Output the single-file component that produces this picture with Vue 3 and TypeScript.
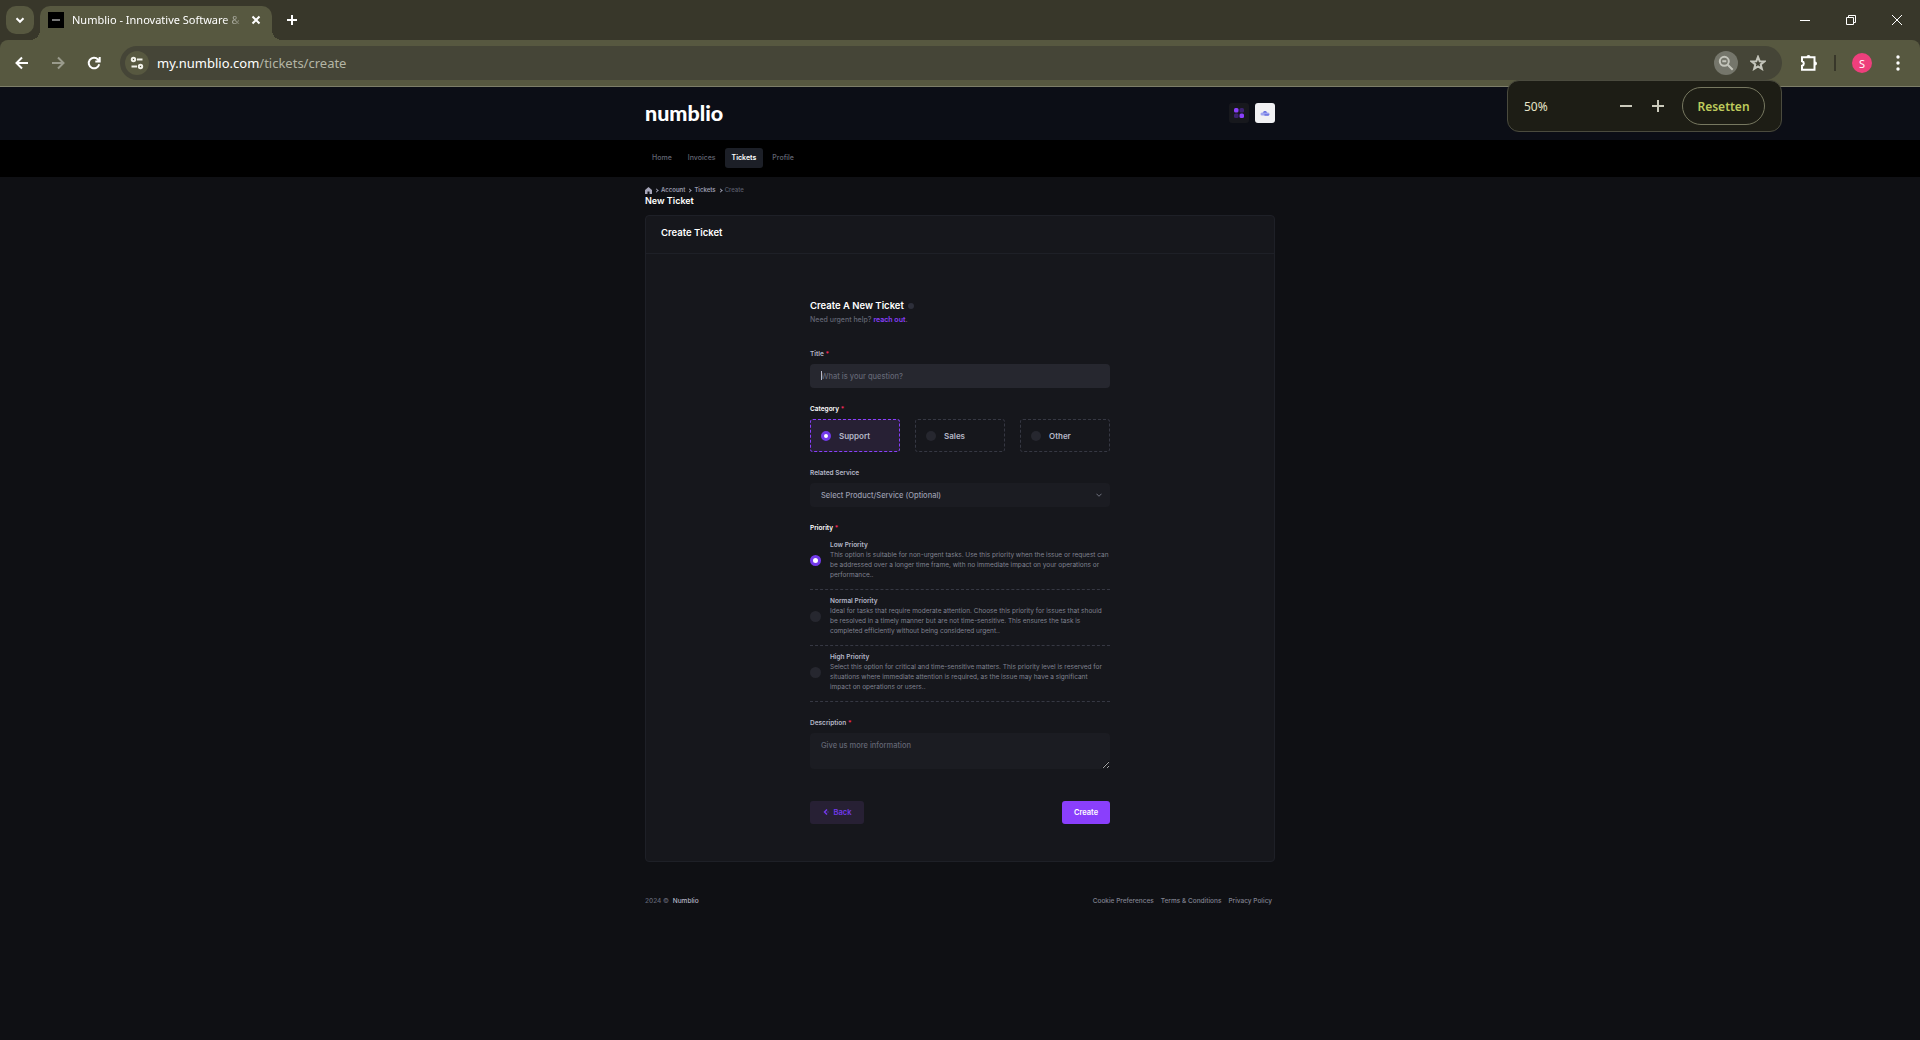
<script setup lang="ts">
import { computed, ref } from 'vue'

interface Option {
  id: string
  label: string
  text?: string
}

const zoomPercent = ref(50)
const zoomStyle = computed(() => ({ zoom: zoomPercent.value / 100 }))

const navItems = ['Home', 'Invoices', 'Tickets', 'Profile']
const activeNav = 'Tickets'

const categories: Option[] = [
  { id: 'support', label: 'Support' },
  { id: 'sales', label: 'Sales' },
  { id: 'other', label: 'Other' },
]
const category = ref('support')

const priorities: Option[] = [
  {
    id: 'low',
    label: 'Low Priority',
    text: 'This option is suitable for non-urgent tasks. Use this priority when the issue or request can be addressed over a longer time frame, with no immediate impact on your operations or performance..',
  },
  {
    id: 'normal',
    label: 'Normal Priority',
    text: 'Ideal for tasks that require moderate attention. Choose this priority for issues that should be resolved in a timely manner but are not time-sensitive. This ensures the task is completed efficiently without being considered urgent..',
  },
  {
    id: 'high',
    label: 'High Priority',
    text: 'Select this option for critical and time-sensitive matters. This priority level is reserved for situations where immediate attention is required, as the issue may have a significant impact on operations or users..',
  },
]
const priority = ref('low')

const title = ref('')
const description = ref('')
const footerLinks = ['Cookie Preferences', 'Terms & Conditions', 'Privacy Policy']
</script>

<template>
  <div class="browser">
    <div class="tabstrip">
      <button class="tab-search" aria-label="Search tabs">
        <svg width="12" height="12" viewBox="0 0 12 12"><path d="M2.5 4.3 6 7.8l3.5-3.5" /></svg>
      </button>
      <div class="tab">
        <span class="favicon"><i></i></span>
        <span class="tab-title">Numblio - Innovative Software &amp;</span>
        <button class="plain tab-close" aria-label="Close tab">
          <svg width="10" height="10" viewBox="0 0 10 10"><path d="m1.5 1.5 7 7m0-7-7 7" /></svg>
        </button>
      </div>
      <button class="plain tab-new" aria-label="New tab">
        <svg width="12" height="12" viewBox="0 0 12 12"><path d="M6 1v10M1 6h10" /></svg>
      </button>
      <div class="window-controls">
        <button class="plain" aria-label="Minimize">
          <svg width="12" height="12" viewBox="0 0 12 12"><path d="M1 6.5h10" /></svg>
        </button>
        <button class="plain" aria-label="Restore">
          <svg width="12" height="12" viewBox="0 0 12 12"><path d="M1.5 3.5h7v7h-7zM3.5 3.500v-2h7v7h-2" /></svg>
        </button>
        <button class="plain" aria-label="Close">
          <svg width="12" height="12" viewBox="0 0 12 12"><path d="m1 1 10 10M11 1 1 11" /></svg>
        </button>
      </div>
    </div>

    <div class="toolbar-back">
      <div class="toolbar">
        <button class="plain tool" aria-label="Back">
          <svg width="16" height="16" viewBox="0 0 16 16"><path d="M14 8H3M8 2.500 2.500 8 8 13.500" /></svg>
        </button>
        <button class="plain tool faded" aria-label="Forward">
          <svg width="16" height="16" viewBox="0 0 16 16"><path d="M2 8h11M8 2.500 13.500 8 8 13.500" /></svg>
        </button>
        <button class="plain tool" aria-label="Reload">
          <svg width="16" height="16" viewBox="0 0 16 16"><path d="M13.200 9.200A5.300 5.300 0 1 1 12 4.500l1.500 1.500M13.700 2v4.400H9.300" /></svg>
        </button>
        <div class="omnibox">
          <button class="site-info" aria-label="Site information">
            <svg width="14" height="14" viewBox="0 0 14 14"><circle cx="3.500" cy="3.500" r="1.700" /><path d="M7 3.500h5.500M1.500 10.500H7" /><circle cx="10.500" cy="10.500" r="1.700" /></svg>
          </button>
          <span class="url"><b>my.numblio.com</b>/tickets/create</span>
          <button class="zoom-badge" aria-label="Zoom">
            <svg width="16" height="16" viewBox="0 0 16 16"><circle cx="6.300" cy="6.300" r="4.500" /><path d="M4.300 6.300h4M9.700 9.700l5 5" /></svg>
          </button>
          <button class="plain star" aria-label="Bookmark this tab">
            <svg width="16" height="16" viewBox="0 0 16 16"><path d="m8 1.900 1.700 4.300 4.600.3-3.600 2.900 1.200 4.500L8 11.400l-3.900 2.500 1.200-4.500-3.600-2.900 4.600-.3z" /></svg>
          </button>
        </div>
        <button class="plain puzzle" aria-label="Extensions">
          <svg width="18" height="18" viewBox="0 0 18 18"><path d="M2 3.200h12.500v12.600H2v-4.100a2.300 2.300 0 0 0 0-4.500z" /><path class="knob" d="M6.500 3a2 2 0 0 1 4 0zM15 7.500a2 2 0 0 1 0 4z" /></svg>
        </button>
        <i class="divider"></i>
        <button class="avatar" aria-label="Account">S</button>
        <button class="plain kebab" aria-label="Menu">
          <svg width="4" height="16" viewBox="0 0 4 16"><circle cx="2" cy="2" r="1.700" /><circle cx="2" cy="8" r="1.700" /><circle cx="2" cy="14" r="1.700" /></svg>
        </button>

        <div class="zoom-popup">
          <span class="zoom-value">{{ zoomPercent }}%</span>
          <button class="plain zoom-step" aria-label="Zoom out" @click="zoomPercent -= 10">
            <svg width="12" height="12" viewBox="0 0 12 12"><path d="M0 6h12" /></svg>
          </button>
          <button class="plain zoom-step" aria-label="Zoom in" @click="zoomPercent += 10">
            <svg width="12" height="12" viewBox="0 0 12 12"><path d="M0 6h12M6 0v12" /></svg>
          </button>
          <button class="zoom-reset" @click="zoomPercent = 100">Resetten</button>
        </div>
      </div>
    </div>

    <div class="page" :style="zoomStyle">
      <header class="header">
        <div class="container header-row">
          <a class="logo" href="#">numblio</a>
          <button class="square" aria-label="Theme">
            <svg width="20" height="20" viewBox="0 0 20 20">
              <rect width="9" height="9" rx="3" fill="#8a3ffc" />
              <rect x="11" width="9" height="9" rx="3" fill="#3c2270" />
              <rect y="11" width="9" height="9" rx="3" fill="#3c2270" />
              <rect x="11" y="11" width="9" height="9" rx="3" fill="#8a3ffc" />
            </svg>
          </button>
          <button class="square light" aria-label="Profile">
            <svg width="20" height="14" viewBox="0 0 20 14">
              <path d="M6 6a4 4 0 0 1 8 0z" fill="#5560dd" />
              <rect x="1" y="5" width="18" height="6" rx="3" fill="#9ea4f0" />
              <path d="M9 9h10a3 3 0 0 1-3 2H9z" fill="#4a52d8" />
            </svg>
          </button>
        </div>
      </header>

      <nav class="nav">
        <div class="container nav-row">
          <a v-for="item in navItems" :key="item" href="#" class="nav-item" :class="{ active: item === activeNav }">{{ item }}</a>
        </div>
      </nav>

      <main class="container main">
        <div class="crumbs">
          <a href="#" aria-label="Home"><svg width="14" height="14" viewBox="0 0 14 14"><path d="M7 0 0 6v8h5V9h4v5h5V6z" fill="#a5a5b8" /></svg></a>
          <i class="chev"></i><a href="#">Account</a>
          <i class="chev"></i><a href="#">Tickets</a>
          <i class="chev"></i><span>Create</span>
        </div>
        <h1>New Ticket</h1>

        <section class="card">
          <h2 class="card-header">Create Ticket</h2>
          <form class="form" @submit.prevent>
            <h3>Create A New Ticket<i class="info"></i></h3>
            <p class="hint">Need urgent help? <a href="#">reach out</a>.</p>

            <div class="field">
              <label class="label" for="title">Title <em>*</em></label>
              <div class="caret-box">
                <input id="title" v-model="title" class="control focused" type="text" placeholder="What is your question?" />
              </div>
            </div>

            <fieldset class="field">
              <legend class="label strong">Category <em>*</em></legend>
              <div class="categories">
                <label v-for="c in categories" :key="c.id" class="category" :class="{ picked: category === c.id }">
                  <input v-model="category" type="radio" name="category" :value="c.id" class="radio" />
                  {{ c.label }}
                </label>
              </div>
            </fieldset>

            <div class="field">
              <label class="label" for="service">Related Service</label>
              <div class="select-box">
                <select id="service" class="control">
                  <option>Select Product/Service (Optional)</option>
                </select>
                <svg width="12" height="12" viewBox="0 0 14 14"><path d="m1 4 6 6 6-6" /></svg>
              </div>
            </div>

            <fieldset class="field">
              <legend class="label strong">Priority <em>*</em></legend>
              <div class="priorities">
                <label v-for="p in priorities" :key="p.id" class="priority">
                  <input v-model="priority" type="radio" name="priority" :value="p.id" class="radio large" />
                  <span class="priority-body">
                    <strong>{{ p.label }}</strong>
                    <span>{{ p.text }}</span>
                  </span>
                </label>
              </div>
            </fieldset>

            <div class="field">
              <label class="label" for="description">Description <em>*</em></label>
              <textarea id="description" v-model="description" class="control area" placeholder="Give us more information"></textarea>
            </div>

            <div class="actions">
              <button type="button" class="btn back">
                <svg width="14" height="14" viewBox="0 0 14 14"><path d="M8 1 3 6l5 5" fill="none" stroke="#7239ea" stroke-width="3" /><path d="M8 6h4" stroke="#3d2a6e" stroke-width="3" /></svg>
                Back
              </button>
              <button type="submit" class="btn create">Create</button>
            </div>
          </form>
        </section>

        <footer class="footer">
          <span class="copy">2024 © <a href="#">Numblio</a></span>
          <a v-for="link in footerLinks" :key="link" href="#">{{ link }}</a>
        </footer>
      </main>
    </div>
  </div>
</template>

<style>
body {
  background: #0f1014;
}
</style>

<style scoped>
* {
  box-sizing: border-box;
}
.browser {
  display: flex;
  flex-direction: column;
  min-height: 100vh;
  background: #0f1014;
  font-family: "Noto Sans", "Open Sans", sans-serif;
}
button {
  padding: 0;
  border: 0;
  font-family: inherit;
  display: flex;
  align-items: center;
  justify-content: center;
}
a {
  color: inherit;
  text-decoration: none;
}
svg {
  display: block;
  flex: none;
}
.plain {
  background: none;
}

/* Tab strip */
.tabstrip {
  display: flex;
  align-items: center;
  height: 40px;
  padding-left: 6px;
  background: #38372a;
}
.tabstrip svg,
.tool svg {
  fill: none;
  stroke: #fff;
  stroke-width: 2;
}
.tab-search {
  width: 28px;
  height: 28px;
  border-radius: 10px;
  background: #575840;
}
.tab {
  position: relative;
  display: flex;
  align-items: center;
  align-self: flex-end;
  width: 232px;
  height: 34px;
  margin-left: 6px;
  padding: 0 10px 6px 8px;
  border-radius: 10px 10px 0 0;
  background: #575840;
}
.tab::before,
.tab::after {
  content: "";
  position: absolute;
  bottom: 0;
  width: 10px;
  height: 10px;
}
.tab::before {
  left: -10px;
  background: radial-gradient(circle at 0 0, transparent 10px, #575840 10px);
}
.tab::after {
  right: -10px;
  background: radial-gradient(circle at 100% 0, transparent 10px, #575840 10px);
}
.favicon {
  display: flex;
  align-items: center;
  justify-content: center;
  width: 16px;
  height: 16px;
  background: #000;
}
.favicon i {
  width: 8px;
  height: 2px;
  background: #777;
}
.tab-title {
  flex: 1;
  margin: 0 4px 0 8px;
  white-space: nowrap;
  font-size: 11px;
  line-height: 18px;
  color: #fff;
  mask-image: linear-gradient(90deg, #000 150px, transparent 172px);
}
.tab-close {
  width: 12px;
  height: 16px;
}
.tab-new {
  width: 28px;
  height: 28px;
  margin-left: 6px;
}
.window-controls {
  display: flex;
  margin-left: auto;
}
.window-controls button {
  width: 46px;
  height: 40px;
}
.window-controls svg {
  stroke-width: 1;
}

/* Toolbar */
.toolbar-back {
  background: #38372a;
}
.toolbar {
  position: relative;
  display: flex;
  align-items: center;
  height: 47px;
  padding: 0 14px 0 4px;
  border-bottom: 1px solid #7d7e69;
  border-radius: 8px 8px 0 0;
  background: #575840;
}
.tool {
  width: 36px;
  height: 36px;
}
.faded {
  opacity: 0.4;
}
.omnibox {
  display: flex;
  flex: 1;
  align-items: center;
  height: 34px;
  margin-left: 8px;
  padding: 0 12px 0 5px;
  border-radius: 17px;
  background: #454537;
}
.site-info,
.zoom-badge {
  width: 24px;
  height: 24px;
  border-radius: 12px;
  background: #575840;
}
.site-info svg,
.zoom-badge svg,
.star svg {
  fill: none;
  stroke: #f0f0e8;
  stroke-width: 2;
}
.url {
  flex: 1;
  margin-left: 8px;
  font-size: 13px;
  line-height: 20px;
  color: #b4b5a5;
}
.url b {
  font-weight: 400;
  color: #fff;
}
.zoom-badge {
  background: #75766b;
}
.zoom-badge svg,
.star svg {
  stroke: #c4c5bb;
}
.star {
  width: 24px;
  height: 24px;
  margin-left: 8px;
}
.puzzle {
  margin-left: 18px;
}
.puzzle svg {
  fill: none;
  stroke: #fff;
  stroke-width: 2;
}
.puzzle .knob {
  fill: #fff;
  stroke: none;
}
.divider {
  width: 2px;
  height: 16px;
  margin: 0 16px;
  background: #38372a;
}
.avatar {
  width: 20px;
  height: 20px;
  border-radius: 10px;
  background: #ee3f7c;
  color: #fff;
  font-size: 11px;
}
.kebab {
  width: 16px;
  margin-left: 18px;
}
.kebab svg {
  fill: #fff;
}
.zoom-popup {
  position: absolute;
  top: 40px;
  right: 138px;
  z-index: 2;
  display: flex;
  align-items: center;
  width: 275px;
  height: 52px;
  padding: 0 16px;
  border: 1px solid #4b4b3e;
  border-radius: 12px;
  background: #1d1d15;
}
.zoom-value {
  flex: 1;
  font-size: 12px;
  color: #e6e5c8;
}
.zoom-step {
  width: 32px;
  height: 32px;
}
.zoom-step svg {
  fill: none;
  stroke: #cbcabb;
  stroke-width: 2;
}
.zoom-reset {
  width: 83px;
  height: 38px;
  margin-left: 8px;
  border: 1px solid #777860;
  border-radius: 19px;
  background: none;
  color: #bfcb5c;
  font-size: 12px;
  font-weight: 600;
}

/* Site, laid out at its natural size and scaled by the browser zoom */
.page {
  flex: 1;
  background: #0f1014;
  color: #9a9cae;
  font-family: Inter, "Liberation Sans", sans-serif;
  font-size: 13px;
  line-height: 20px;
}
.container {
  width: 100%;
  max-width: 1320px;
  margin: 0 auto;
  padding: 0 30px;
}
.header {
  background: #0c0e16;
}
.header-row {
  display: flex;
  align-items: center;
  gap: 12px;
  height: 106px;
  padding-bottom: 2px;
}
.logo {
  margin-right: auto;
  font-family: Lato, sans-serif;
  font-size: 43px;
  font-weight: 900;
  line-height: 48px;
  color: #fff;
}
.square {
  width: 40px;
  height: 40px;
  border-radius: 6px;
  background: #17181d;
}
.light {
  background: #f1f1f3;
}
.nav {
  background: #000;
}
.nav-row {
  display: flex;
  align-items: center;
  gap: 4px;
  height: 74px;
  padding-bottom: 2px;
}
.nav-item {
  padding: 10px 14px;
  border-radius: 6px;
  font-size: 14px;
  font-weight: 500;
  color: #636674;
}
.nav-item.active {
  background: #1c1f27;
  color: #fff;
  font-weight: 600;
}
.main {
  padding-top: 16px;
}
.crumbs {
  display: flex;
  align-items: center;
  gap: 6px;
  font-size: 12px;
  font-weight: 600;
  color: #9a9cae;
}
.crumbs span {
  font-weight: 500;
  color: #5c5f6d;
}
.chev {
  width: 6px;
  height: 6px;
  border: solid #9a9cae;
  border-width: 2px 2px 0 0;
  transform: rotate(45deg);
}
h1,
h2,
h3,
p {
  margin: 0;
}
h1 {
  font-size: 18px;
  font-weight: 600;
  line-height: 24px;
  color: #fff;
}
.card {
  margin-top: 16px;
  border: 1px solid #1e2027;
  border-radius: 8px;
  background: #16171c;
}
.card-header {
  padding: 20px 30px 28px;
  border-bottom: 1px solid #1e2027;
  font-size: 19px;
  font-weight: 600;
  line-height: 26px;
  color: #fff;
}
.form {
  max-width: 600px;
  margin: 0 auto;
  padding: 88px 0 74px;
}
h3 {
  display: flex;
  align-items: center;
  gap: 8px;
  font-size: 19px;
  font-weight: 600;
  line-height: 30px;
  color: #fff;
}
.info {
  width: 12px;
  height: 12px;
  border-radius: 6px;
  background: #2d2f3a;
}
.hint {
  margin: 4px 0 48px;
  font-size: 14px;
  font-weight: 500;
  color: #636674;
}
.hint a {
  color: #8a3ffc;
  font-weight: 600;
}
.field {
  min-width: 0;
  margin: 0 0 32px;
  padding: 0;
  border: 0;
}
.label {
  display: block;
  padding: 0;
  margin-bottom: 10px;
  font-weight: 600;
  color: #b5b7c8;
}
.strong {
  color: #fff;
}
.label em {
  font-style: normal;
  color: #f8285a;
}
.control {
  display: block;
  width: 100%;
  height: 48px;
  padding: 0 22px;
  border: 0;
  border-radius: 8px;
  outline: 0;
  background: #1b1c22;
  color: #9a9cae;
  font-family: inherit;
  font-size: 15px;
  font-weight: 500;
  appearance: none;
}
.control::placeholder {
  color: #636674;
  opacity: 1;
}
.focused {
  background: #26272f;
}
.caret-box,
.select-box {
  position: relative;
}
.caret-box::after {
  content: "";
  position: absolute;
  top: 14px;
  left: 22px;
  width: 2px;
  height: 18px;
  background: #b5b7c8;
}
.select-box svg {
  position: absolute;
  top: 18px;
  right: 16px;
  fill: none;
  stroke: #808290;
  stroke-width: 2;
  pointer-events: none;
}
.categories {
  display: grid;
  grid-template-columns: repeat(3, 1fr);
  gap: 30px;
}
.category {
  display: flex;
  align-items: center;
  gap: 16px;
  height: 66px;
  padding: 0 20px;
  border: 1px dashed #363843;
  border-radius: 6px;
  font-size: 16px;
  font-weight: 600;
  color: #b5b7c8;
}
.picked {
  border-color: #8a3ffc;
  background: #272034;
}
.radio {
  flex: none;
  width: 20px;
  height: 20px;
  margin: 0;
  border-radius: 50%;
  background: #26272f;
  appearance: none;
}
.large {
  width: 22px;
  height: 22px;
}
.radio:checked {
  border: 6px solid #7239ea;
  background: #fff;
}
.priorities {
  display: flex;
  flex-direction: column;
  gap: 12px;
  padding-top: 4px;
}
.priority {
  display: flex;
  align-items: center;
  gap: 18px;
  padding-bottom: 18px;
  border-bottom: 1px dashed #363843;
}
.priority-body {
  display: flex;
  flex-direction: column;
  color: #808290;
}
.priority-body strong {
  font-weight: 600;
  color: #b5b7c8;
}
.area {
  height: 72px;
  padding: 14px 22px;
  line-height: 22px;
  resize: vertical;
}
.actions {
  display: flex;
  justify-content: space-between;
  padding-top: 32px;
}
.btn {
  gap: 8px;
  height: 46px;
  border-radius: 6px;
  font-size: 15px;
  font-weight: 600;
}
.back {
  width: 108px;
  background: #272034;
  color: #7239ea;
}
.create {
  width: 96px;
  background: #8a3ffc;
  color: #fff;
}
.footer {
  display: flex;
  gap: 14px;
  padding: 68px 6px 60px 0;
  font-weight: 500;
  color: #808290;
}
.copy {
  margin-right: auto;
  color: #636674;
}
.copy a {
  margin-left: 4px;
  color: #b5b7c8;
}
</style>
